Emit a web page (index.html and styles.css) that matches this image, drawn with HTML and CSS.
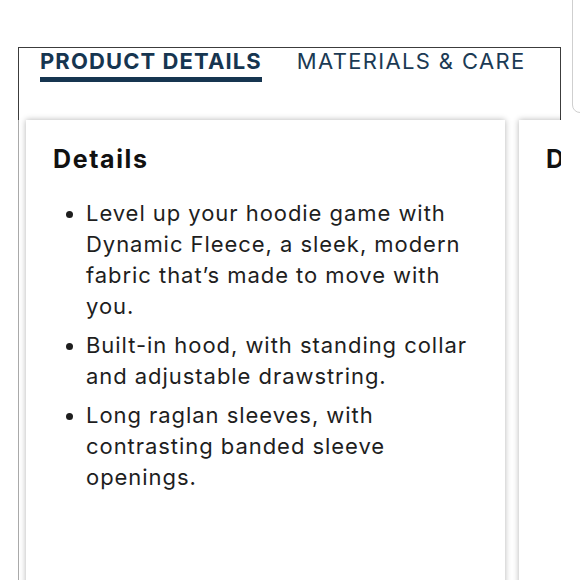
FILE: index.html
```html
<!DOCTYPE html>
<html lang="en">
<head>
<meta charset="utf-8">
<title>Product details</title>
<link rel="stylesheet" href="styles.css">
</head>
<body>
<div class="edge-panel"></div>
<section class="frame">
  <nav class="tabs">
    <span class="tab tab-active">PRODUCT DETAILS</span>
    <span class="tab">MATERIALS &amp; CARE</span>
  </nav>
  <div class="cards">
    <article class="card">
      <h2 class="card-title">Details</h2>
      <ul class="card-list">
        <li>Level up your hoodie game with Dynamic Fleece, a sleek, modern fabric that’s made to move with you.</li>
        <li>Built-in hood, with standing collar and adjustable drawstring.</li>
        <li>Long raglan sleeves, with contrasting banded sleeve openings.</li>
      </ul>
    </article>
    <article class="card card-peek">
      <h2 class="card-title">Details</h2>
    </article>
  </div>
</section>
</body>
</html>
```
FILE: styles.css
```css
html, body {
  margin: 0;
  padding: 0;
  background: #ffffff;
  height: 580px;
  overflow: hidden;
}

body {
  font-family: Inter, "Noto Sans", sans-serif;
  color: #1e1e1e;
  position: relative;
}

.edge-panel {
  position: absolute;
  left: 572px;
  top: -20px;
  width: 60px;
  height: 131px;
  border: 1px solid #cfcfcf;
  border-radius: 8px;
}

.frame {
  margin: 47px 0 0 18px;
  width: 543px;
  height: 533px;
  overflow: hidden;
  box-sizing: border-box;
  display: flex;
  flex-direction: column;
}

.tabs {
  flex: none;
  height: 73px;
  box-sizing: border-box;
  border: 1px solid #3c3c3c;
  border-bottom: none;
  padding: 0 0 0 21px;
  display: flex;
  align-items: flex-start;
  gap: 35px;
}

.tab {
  font-size: 22px;
  line-height: 26px;
  color: #1b3a54;
  letter-spacing: 1.35px;
  white-space: nowrap;
}

.tab-active {
  font-weight: 700;
  color: #163550;
  letter-spacing: 1.1px;
  padding-bottom: 3px;
  border-bottom: 5px solid #163550;
}

.cards {
  flex: 1;
  display: flex;
  gap: 14px;
  padding-left: 7px;
  border-left: 2px solid #a9a9a9;
  border-right: 2px solid #a9a9a9;
  margin-left: -1px;
  margin-right: -1px;
}

.card {
  flex: none;
  width: 479px;
  min-height: 500px;
  box-sizing: border-box;
  padding: 24px 30px 0 27px;
  background: #ffffff;
  box-shadow: 0 0 6px rgba(0, 0, 0, 0.3);
}

.card-peek {
  width: 60px;
  overflow: hidden;
}

.card-title {
  margin: 0;
  font-size: 25px;
  line-height: 30px;
  font-weight: 700;
  letter-spacing: 1.6px;
  color: #111111;
  white-space: nowrap;
}

.card-list {
  margin: 24px 0 0;
  padding-left: 33px;
  list-style: disc;
}

.card-list li {
  font-size: 22px;
  line-height: 31px;
  letter-spacing: 0.95px;
  margin-bottom: 8px;
  padding-left: 0;
}

.card-list li::marker {
  font-size: 21px;
}
```
